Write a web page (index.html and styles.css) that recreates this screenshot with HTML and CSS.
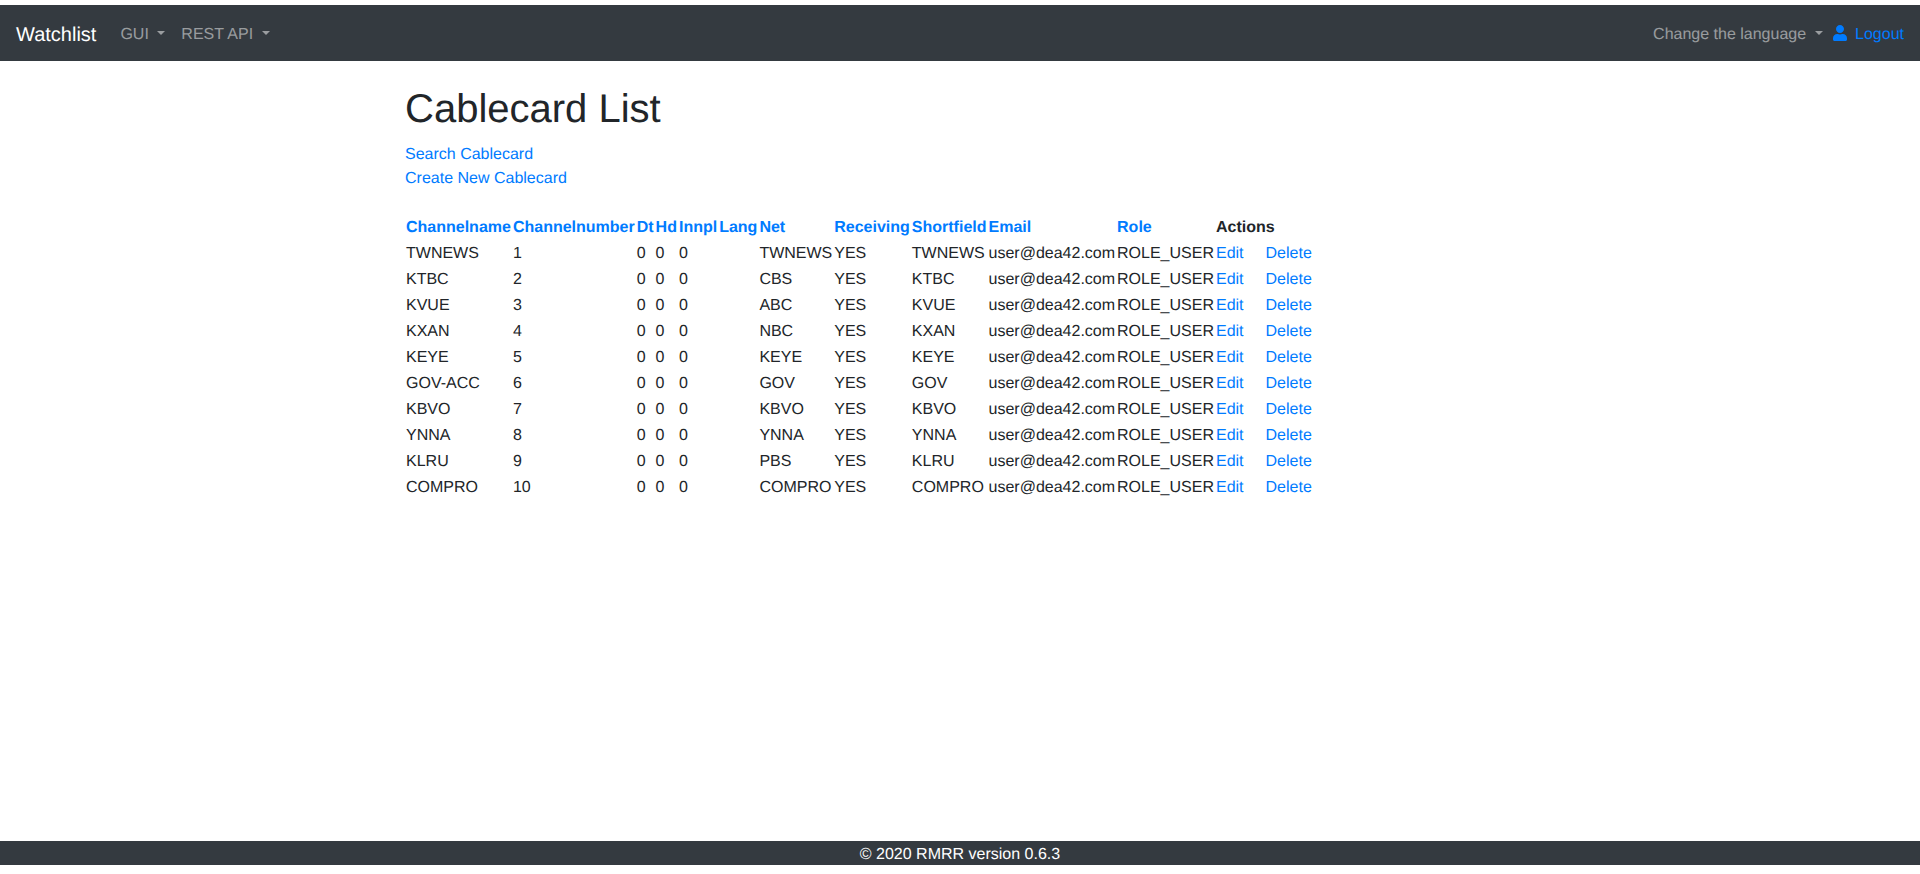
FILE: index.html
```html
<!DOCTYPE html>
<html lang="en">
<head>
<meta charset="utf-8">
<title>Cablecard List</title>
<link rel="stylesheet" href="styles.css">
</head>
<body>
<nav class="navbar">
  <a class="brand" href="#">Watchlist</a>
  <ul class="nav">
    <li><a class="nav-link caret" href="#">GUI</a></li>
    <li><a class="nav-link caret" href="#">REST API</a></li>
  </ul>
  <ul class="nav nav-right">
    <li><a class="nav-link caret" href="#">Change the language</a></li>
    <li><a class="logout" href="#"><svg class="user-icon" viewBox="0 0 448 512" aria-hidden="true"><path fill="currentColor" d="M224 256c70.7 0 128-57.3 128-128S294.7 0 224 0 96 57.3 96 128s57.3 128 128 128zm89.6 32h-16.7c-22.2 10.2-46.9 16-72.9 16s-50.6-5.8-72.9-16h-16.7C60.2 288 0 348.2 0 422.4V464c0 26.5 21.5 48 48 48h352c26.5 0 48-21.5 48-48v-41.6c0-74.2-60.2-134.4-134.4-134.4z"/></svg> Logout</a></li>
  </ul>
</nav>
<main class="container">
  <h1>Cablecard List</h1>
  <p class="action"><a href="#">Search Cablecard</a></p>
  <p class="action"><a href="#">Create New Cablecard</a></p>
  <table class="list">
    <thead>
      <tr>
        <th><a href="#">Channelname</a></th><th><a href="#">Channelnumber</a></th><th><a href="#">Dt</a></th><th><a href="#">Hd</a></th><th><a href="#">Innpl</a></th><th><a href="#">Lang</a></th><th><a href="#">Net</a></th><th><a href="#">Receiving</a></th><th><a href="#">Shortfield</a></th><th class="col-email"><a href="#">Email</a></th><th><a href="#">Role</a></th><th>Actions</th>
      </tr>
    </thead>
    <tbody>
      <tr><td>TWNEWS</td><td>1</td><td>0</td><td>0</td><td>0</td><td></td><td>TWNEWS</td><td>YES</td><td>TWNEWS</td><td>user@dea42.com</td><td>ROLE_USER</td><td><a href="#">Edit</a><a class="delete" href="#">Delete</a></td></tr>
      <tr><td>KTBC</td><td>2</td><td>0</td><td>0</td><td>0</td><td></td><td>CBS</td><td>YES</td><td>KTBC</td><td>user@dea42.com</td><td>ROLE_USER</td><td><a href="#">Edit</a><a class="delete" href="#">Delete</a></td></tr>
      <tr><td>KVUE</td><td>3</td><td>0</td><td>0</td><td>0</td><td></td><td>ABC</td><td>YES</td><td>KVUE</td><td>user@dea42.com</td><td>ROLE_USER</td><td><a href="#">Edit</a><a class="delete" href="#">Delete</a></td></tr>
      <tr><td>KXAN</td><td>4</td><td>0</td><td>0</td><td>0</td><td></td><td>NBC</td><td>YES</td><td>KXAN</td><td>user@dea42.com</td><td>ROLE_USER</td><td><a href="#">Edit</a><a class="delete" href="#">Delete</a></td></tr>
      <tr><td>KEYE</td><td>5</td><td>0</td><td>0</td><td>0</td><td></td><td>KEYE</td><td>YES</td><td>KEYE</td><td>user@dea42.com</td><td>ROLE_USER</td><td><a href="#">Edit</a><a class="delete" href="#">Delete</a></td></tr>
      <tr><td>GOV-ACC</td><td>6</td><td>0</td><td>0</td><td>0</td><td></td><td>GOV</td><td>YES</td><td>GOV</td><td>user@dea42.com</td><td>ROLE_USER</td><td><a href="#">Edit</a><a class="delete" href="#">Delete</a></td></tr>
      <tr><td>KBVO</td><td>7</td><td>0</td><td>0</td><td>0</td><td></td><td>KBVO</td><td>YES</td><td>KBVO</td><td>user@dea42.com</td><td>ROLE_USER</td><td><a href="#">Edit</a><a class="delete" href="#">Delete</a></td></tr>
      <tr><td>YNNA</td><td>8</td><td>0</td><td>0</td><td>0</td><td></td><td>YNNA</td><td>YES</td><td>YNNA</td><td>user@dea42.com</td><td>ROLE_USER</td><td><a href="#">Edit</a><a class="delete" href="#">Delete</a></td></tr>
      <tr><td>KLRU</td><td>9</td><td>0</td><td>0</td><td>0</td><td></td><td>PBS</td><td>YES</td><td>KLRU</td><td>user@dea42.com</td><td>ROLE_USER</td><td><a href="#">Edit</a><a class="delete" href="#">Delete</a></td></tr>
      <tr><td>COMPRO</td><td>10</td><td>0</td><td>0</td><td>0</td><td></td><td>COMPRO</td><td>YES</td><td>COMPRO</td><td>user@dea42.com</td><td>ROLE_USER</td><td><a href="#">Edit</a><a class="delete" href="#">Delete</a></td></tr>
    </tbody>
  </table>
</main>
<footer class="footer">© 2020 RMRR version 0.6.3</footer>
</body>
</html>
```
FILE: styles.css
```css
* { box-sizing: border-box; }
body {
  margin: 0;
  padding: 5px 0 9px;
  display: flex;
  flex-direction: column;
  height: 874px;
  font-family: "Liberation Sans", Arial, sans-serif;
  font-size: 16px;
  line-height: 1.5;
  color: #212529;
  background: #fff;
  text-rendering: geometricPrecision;
}
a { color: #007bff; text-decoration: none; }

.navbar {
  display: flex;
  align-items: center;
  height: 56px;
  padding: 10px 16px 6px;
  background: #343a40;
}
.brand {
  color: #fff;
  font-size: 20px;
  line-height: 30px;
  margin-right: 16px;
}
.nav {
  display: flex;
  align-items: center;
  list-style: none;
  margin: 0;
  padding: 0;
}
.nav-right { margin-left: auto; }
.nav-link {
  display: block;
  padding: 8px;
  color: rgba(255, 255, 255, .5);
}
.caret::after {
  content: "";
  display: inline-block;
  margin-left: 8.5px;
  vertical-align: 4px;
  border-top: 4.8px solid;
  border-left: 4.8px solid transparent;
  border-right: 4.8px solid transparent;
}
.logout { display: block; margin-left: 2px; }
.user-icon {
  display: inline-block;
  width: 14px;
  height: 16px;
  margin-right: 4px;
  vertical-align: -2px;
}

.container {
  flex: 1;
  width: 1140px;
  margin: 0 auto;
  padding: 0 15px;
}
h1 {
  margin: 24px 0 10px;
  font-size: 40px;
  font-weight: 500;
  line-height: 48px;
}
.action { margin: 0; }

.list {
  margin-top: 24px;
  border-collapse: collapse;
}
.list th, .list td {
  padding: 1px;
  text-align: left;
  vertical-align: top;
  white-space: nowrap;
}
.list th { font-weight: 700; }
.col-email { min-width: 128px; }
.delete { margin-left: 22px; }

.footer {
  height: 24px;
  line-height: 27px;
  text-align: center;
  color: #fff;
  background: #343a40;
}
```
